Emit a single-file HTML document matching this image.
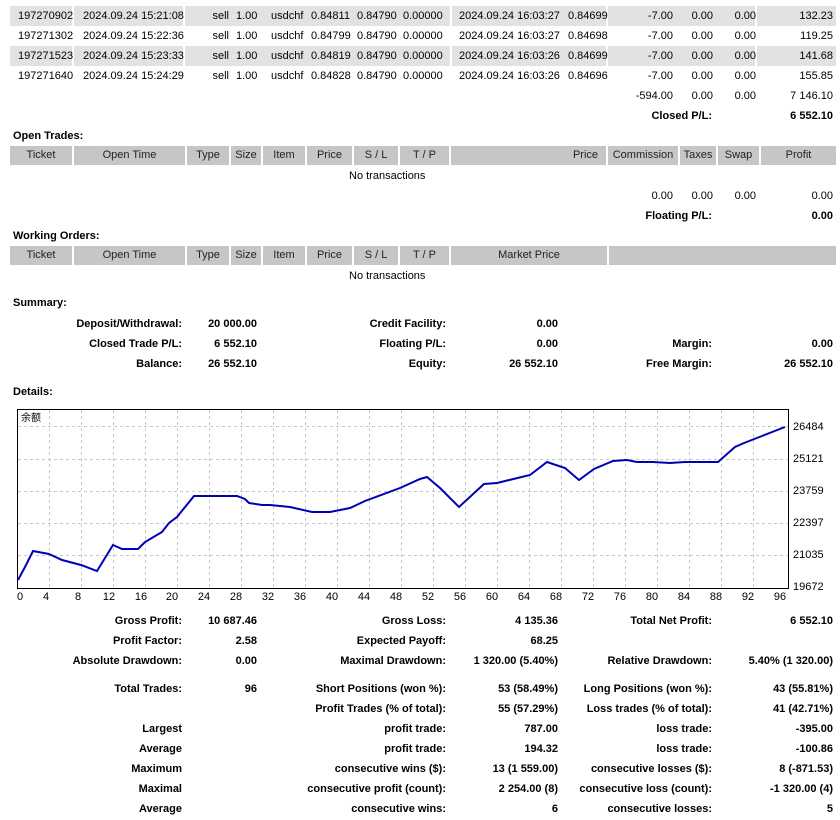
<!DOCTYPE html>
<html><head><meta charset="utf-8"><style>
body{margin:0;background:#fff;width:840px;height:820px;overflow:hidden;font-family:"Liberation Sans","Noto Sans CJK SC",sans-serif;font-size:11px;color:#000}
.a{position:absolute;line-height:14px;white-space:nowrap}
.b{font-weight:bold}
.g{position:absolute;background:#e2e2e2;height:20px}
.h{position:absolute;background:#c6c6c6;height:19px;line-height:19px;text-align:center;color:#222}
</style></head><body>
<div style="position:relative;width:840px;height:820px">
<div class="g" style="left:10px;width:62px;top:6px"></div><div class="g" style="left:74px;width:109px;top:6px"></div><div class="g" style="left:185px;width:265px;top:6px"></div><div class="g" style="left:452px;width:154px;top:6px"></div><div class="g" style="left:608px;width:147px;top:6px"></div><div class="g" style="left:757px;width:79px;top:6px"></div>
<div class="g" style="left:10px;width:62px;top:46px"></div><div class="g" style="left:74px;width:109px;top:46px"></div><div class="g" style="left:185px;width:265px;top:46px"></div><div class="g" style="left:452px;width:154px;top:46px"></div><div class="g" style="left:608px;width:147px;top:46px"></div><div class="g" style="left:757px;width:79px;top:46px"></div>

<div class="a" style="left:18px;top:9px">197270902</div><div class="a" style="left:83px;top:9px">2024.09.24 15:21:08</div><div class="a" style="right:611px;top:9px">sell</div><div class="a" style="left:236px;top:9px">1.00</div><div class="a" style="left:271px;top:9px">usdchf</div><div class="a" style="left:311px;top:9px">0.84811</div><div class="a" style="left:357px;top:9px">0.84790</div><div class="a" style="left:403px;top:9px">0.00000</div><div class="a" style="left:459px;top:9px">2024.09.24 16:03:27</div><div class="a" style="left:568px;top:9px">0.84699</div><div class="a" style="right:167px;top:9px">-7.00</div><div class="a" style="right:127px;top:9px">0.00</div><div class="a" style="right:84px;top:9px">0.00</div><div class="a" style="right:7px;top:9px">132.23</div>

<div class="a" style="left:18px;top:29px">197271302</div><div class="a" style="left:83px;top:29px">2024.09.24 15:22:36</div><div class="a" style="right:611px;top:29px">sell</div><div class="a" style="left:236px;top:29px">1.00</div><div class="a" style="left:271px;top:29px">usdchf</div><div class="a" style="left:311px;top:29px">0.84799</div><div class="a" style="left:357px;top:29px">0.84790</div><div class="a" style="left:403px;top:29px">0.00000</div><div class="a" style="left:459px;top:29px">2024.09.24 16:03:27</div><div class="a" style="left:568px;top:29px">0.84698</div><div class="a" style="right:167px;top:29px">-7.00</div><div class="a" style="right:127px;top:29px">0.00</div><div class="a" style="right:84px;top:29px">0.00</div><div class="a" style="right:7px;top:29px">119.25</div>

<div class="a" style="left:18px;top:49px">197271523</div><div class="a" style="left:83px;top:49px">2024.09.24 15:23:33</div><div class="a" style="right:611px;top:49px">sell</div><div class="a" style="left:236px;top:49px">1.00</div><div class="a" style="left:271px;top:49px">usdchf</div><div class="a" style="left:311px;top:49px">0.84819</div><div class="a" style="left:357px;top:49px">0.84790</div><div class="a" style="left:403px;top:49px">0.00000</div><div class="a" style="left:459px;top:49px">2024.09.24 16:03:26</div><div class="a" style="left:568px;top:49px">0.84699</div><div class="a" style="right:167px;top:49px">-7.00</div><div class="a" style="right:127px;top:49px">0.00</div><div class="a" style="right:84px;top:49px">0.00</div><div class="a" style="right:7px;top:49px">141.68</div>

<div class="a" style="left:18px;top:69px">197271640</div><div class="a" style="left:83px;top:69px">2024.09.24 15:24:29</div><div class="a" style="right:611px;top:69px">sell</div><div class="a" style="left:236px;top:69px">1.00</div><div class="a" style="left:271px;top:69px">usdchf</div><div class="a" style="left:311px;top:69px">0.84828</div><div class="a" style="left:357px;top:69px">0.84790</div><div class="a" style="left:403px;top:69px">0.00000</div><div class="a" style="left:459px;top:69px">2024.09.24 16:03:26</div><div class="a" style="left:568px;top:69px">0.84696</div><div class="a" style="right:167px;top:69px">-7.00</div><div class="a" style="right:127px;top:69px">0.00</div><div class="a" style="right:84px;top:69px">0.00</div><div class="a" style="right:7px;top:69px">155.85</div>

<div class="a" style="right:167px;top:89px">-594.00</div><div class="a" style="right:127px;top:89px">0.00</div><div class="a" style="right:84px;top:89px">0.00</div><div class="a" style="right:7px;top:89px">7 146.10</div>
<div class="a b" style="right:128px;top:109px">Closed P/L:</div><div class="a b" style="right:7px;top:109px">6 552.10</div>

<div class="a b" style="left:13px;top:129px">Open Trades:</div>
<div class="h" style="left:10px;width:62px;top:146px">Ticket</div><div class="h" style="left:74px;width:111px;top:146px">Open Time</div><div class="h" style="left:187px;width:42px;top:146px">Type</div><div class="h" style="left:231px;width:30px;top:146px">Size</div><div class="h" style="left:263px;width:42px;top:146px">Item</div><div class="h" style="left:307px;width:45px;top:146px">Price</div><div class="h" style="left:354px;width:44px;top:146px">S / L</div><div class="h" style="left:400px;width:49px;top:146px">T / P</div><div class="h" style="left:451px;width:155px;top:146px;text-align:right"><span style="padding-right:8px">Price</span></div><div class="h" style="left:608px;width:70px;top:146px">Commission</div><div class="h" style="left:680px;width:36px;top:146px">Taxes</div><div class="h" style="left:718px;width:41px;top:146px">Swap</div><div class="h" style="left:761px;width:75px;top:146px">Profit</div>
<div class="a" style="left:349px;top:169px">No transactions</div>
<div class="a" style="right:167px;top:189px">0.00</div><div class="a" style="right:127px;top:189px">0.00</div><div class="a" style="right:84px;top:189px">0.00</div><div class="a" style="right:7px;top:189px">0.00</div>
<div class="a b" style="right:128px;top:209px">Floating P/L:</div><div class="a b" style="right:7px;top:209px">0.00</div>

<div class="a b" style="left:13px;top:229px">Working Orders:</div>
<div class="h" style="left:10px;width:62px;top:246px">Ticket</div><div class="h" style="left:74px;width:111px;top:246px">Open Time</div><div class="h" style="left:187px;width:42px;top:246px">Type</div><div class="h" style="left:231px;width:30px;top:246px">Size</div><div class="h" style="left:263px;width:42px;top:246px">Item</div><div class="h" style="left:307px;width:45px;top:246px">Price</div><div class="h" style="left:354px;width:44px;top:246px">S / L</div><div class="h" style="left:400px;width:49px;top:246px">T / P</div><div class="h" style="left:451px;width:156px;top:246px">Market Price</div><div class="h" style="left:609px;width:227px;top:246px"></div>
<div class="a" style="left:349px;top:269px">No transactions</div>

<div class="a b" style="left:13px;top:296px">Summary:</div>
<div class="a b" style="right:658px;top:317px">Deposit/Withdrawal:</div><div class="a b" style="right:583px;top:317px">20 000.00</div><div class="a b" style="right:394px;top:317px">Credit Facility:</div><div class="a b" style="right:282px;top:317px">0.00</div>
<div class="a b" style="right:658px;top:337px">Closed Trade P/L:</div><div class="a b" style="right:583px;top:337px">6 552.10</div><div class="a b" style="right:394px;top:337px">Floating P/L:</div><div class="a b" style="right:282px;top:337px">0.00</div><div class="a b" style="right:128px;top:337px">Margin:</div><div class="a b" style="right:7px;top:337px">0.00</div>
<div class="a b" style="right:658px;top:357px">Balance:</div><div class="a b" style="right:583px;top:357px">26 552.10</div><div class="a b" style="right:394px;top:357px">Equity:</div><div class="a b" style="right:282px;top:357px">26 552.10</div><div class="a b" style="right:128px;top:357px">Free Margin:</div><div class="a b" style="right:7px;top:357px">26 552.10</div>

<div class="a b" style="left:13px;top:385px">Details:</div>

<svg style="position:absolute;left:0;top:400px" width="840" height="205" font-family="'Liberation Sans','Noto Sans CJK SC',sans-serif" font-size="11">
<g stroke="#c8c8c8" stroke-dasharray="3,3" stroke-width="1">
<path d="M49.5 10V188M81.5 10V188M113.5 10V188M145.5 10V188M177.5 10V188M209.5 10V188M241.5 10V188M273.5 10V188M305.5 10V188M337.5 10V188M369.5 10V188M401.5 10V188M433.5 10V188M465.5 10V188M497.5 10V188M529.5 10V188M561.5 10V188M593.5 10V188M625.5 10V188M657.5 10V188M689.5 10V188M721.5 10V188M753.5 10V188"/>
<path d="M18 26.5H788M18 59.5H788M18 91.5H788M18 123.5H788M18 155.5H788"/>
</g>
<rect x="17.5" y="9.5" width="771" height="179" fill="none" stroke="#000"/>
<text x="21" y="21" font-size="10">余额</text>
<polyline fill="none" stroke="#0000b4" stroke-width="2" points="18,180 25,167 33,151 49,154 62,160 81,165 97,171 113,145 122,149 138,149 145,142 162,132 169,123 177,117 194,96 237,96 245,99 249,103 262,105 270,105 290,107 312,112 330,112 350,108 365,101 400,88 420,79 427,77 440,88 459,107 484,84 497,83 530,75 547,62 565,68 579,80 594,69 613,61 627,60 637,62 653,62 670,63 685,62 718,62 735,47 744,43 762,36 785,27"/>
<g fill="#000"><text x="793" y="30">26484</text><text x="793" y="62">25121</text><text x="793" y="94">23759</text><text x="793" y="126">22397</text><text x="793" y="158">21035</text><text x="793" y="190">19672</text></g>
<g fill="#000" text-anchor="middle">
<text x="20" y="200">0</text><text x="46" y="200">4</text><text x="78" y="200">8</text><text x="109" y="200">12</text><text x="141" y="200">16</text><text x="172" y="200">20</text><text x="204" y="200">24</text><text x="236" y="200">28</text><text x="268" y="200">32</text><text x="300" y="200">36</text><text x="332" y="200">40</text><text x="364" y="200">44</text><text x="396" y="200">48</text><text x="428" y="200">52</text><text x="460" y="200">56</text><text x="492" y="200">60</text><text x="524" y="200">64</text><text x="556" y="200">68</text><text x="588" y="200">72</text><text x="620" y="200">76</text><text x="652" y="200">80</text><text x="684" y="200">84</text><text x="716" y="200">88</text><text x="748" y="200">92</text><text x="780" y="200">96</text>
</g>
</svg>

<div class="a b" style="right:658px;top:614px">Gross Profit:</div><div class="a b" style="right:583px;top:614px">10 687.46</div><div class="a b" style="right:394px;top:614px">Gross Loss:</div><div class="a b" style="right:282px;top:614px">4 135.36</div><div class="a b" style="right:128px;top:614px">Total Net Profit:</div><div class="a b" style="right:7px;top:614px">6 552.10</div>
<div class="a b" style="right:658px;top:634px">Profit Factor:</div><div class="a b" style="right:583px;top:634px">2.58</div><div class="a b" style="right:394px;top:634px">Expected Payoff:</div><div class="a b" style="right:282px;top:634px">68.25</div>
<div class="a b" style="right:658px;top:654px">Absolute Drawdown:</div><div class="a b" style="right:583px;top:654px">0.00</div><div class="a b" style="right:394px;top:654px">Maximal Drawdown:</div><div class="a b" style="right:282px;top:654px">1 320.00 (5.40%)</div><div class="a b" style="right:128px;top:654px">Relative Drawdown:</div><div class="a b" style="right:7px;top:654px">5.40% (1 320.00)</div>
<div class="a b" style="right:658px;top:682px">Total Trades:</div><div class="a b" style="right:583px;top:682px">96</div><div class="a b" style="right:394px;top:682px">Short Positions (won %):</div><div class="a b" style="right:282px;top:682px">53 (58.49%)</div><div class="a b" style="right:128px;top:682px">Long Positions (won %):</div><div class="a b" style="right:7px;top:682px">43 (55.81%)</div>
<div class="a b" style="right:394px;top:702px">Profit Trades (% of total):</div><div class="a b" style="right:282px;top:702px">55 (57.29%)</div><div class="a b" style="right:128px;top:702px">Loss trades (% of total):</div><div class="a b" style="right:7px;top:702px">41 (42.71%)</div>
<div class="a b" style="right:658px;top:722px">Largest</div><div class="a b" style="right:394px;top:722px">profit trade:</div><div class="a b" style="right:282px;top:722px">787.00</div><div class="a b" style="right:128px;top:722px">loss trade:</div><div class="a b" style="right:7px;top:722px">-395.00</div>
<div class="a b" style="right:658px;top:742px">Average</div><div class="a b" style="right:394px;top:742px">profit trade:</div><div class="a b" style="right:282px;top:742px">194.32</div><div class="a b" style="right:128px;top:742px">loss trade:</div><div class="a b" style="right:7px;top:742px">-100.86</div>
<div class="a b" style="right:658px;top:762px">Maximum</div><div class="a b" style="right:394px;top:762px">consecutive wins ($):</div><div class="a b" style="right:282px;top:762px">13 (1 559.00)</div><div class="a b" style="right:128px;top:762px">consecutive losses ($):</div><div class="a b" style="right:7px;top:762px">8 (-871.53)</div>
<div class="a b" style="right:658px;top:782px">Maximal</div><div class="a b" style="right:394px;top:782px">consecutive profit (count):</div><div class="a b" style="right:282px;top:782px">2 254.00 (8)</div><div class="a b" style="right:128px;top:782px">consecutive loss (count):</div><div class="a b" style="right:7px;top:782px">-1 320.00 (4)</div>
<div class="a b" style="right:658px;top:802px">Average</div><div class="a b" style="right:394px;top:802px">consecutive wins:</div><div class="a b" style="right:282px;top:802px">6</div><div class="a b" style="right:128px;top:802px">consecutive losses:</div><div class="a b" style="right:7px;top:802px">5</div>
</div>
</body></html>
